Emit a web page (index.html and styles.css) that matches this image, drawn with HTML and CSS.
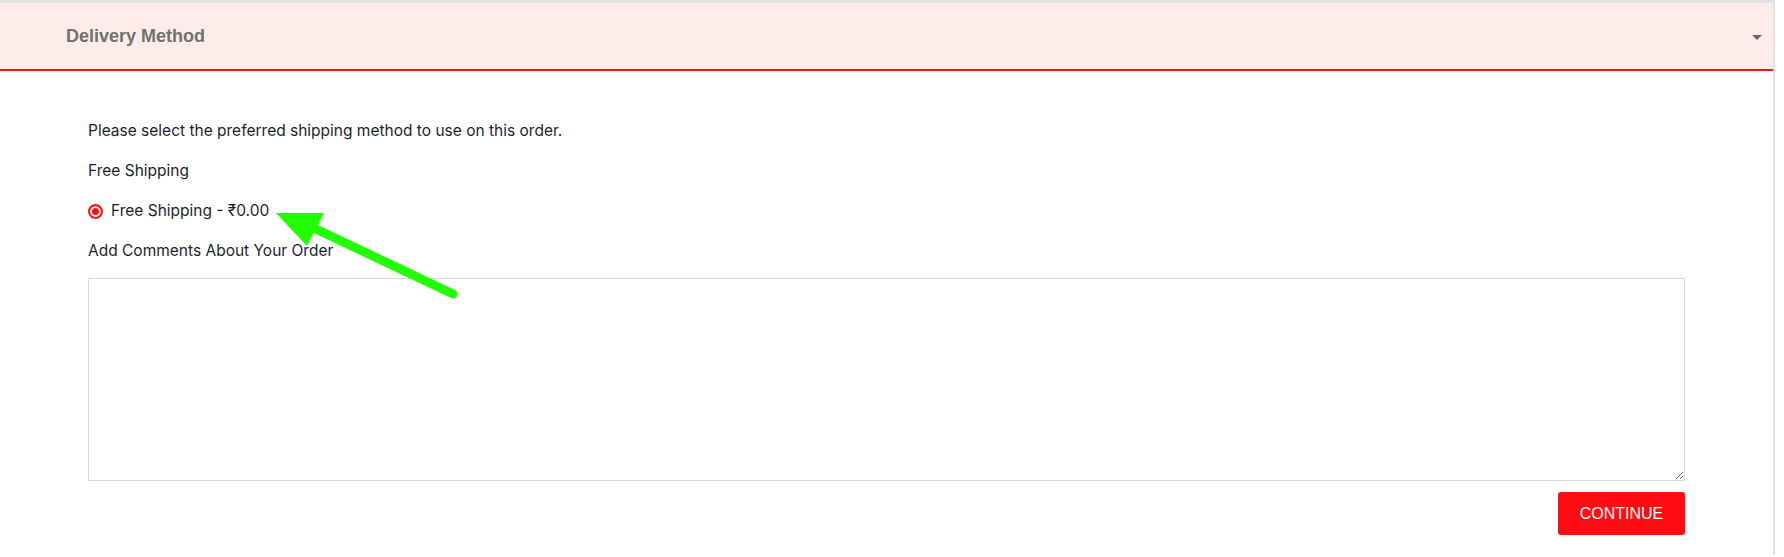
FILE: index.html
```html
<!DOCTYPE html>
<html>
<head>
<meta charset="utf-8"/>
<title>Delivery Method</title>
<link rel="stylesheet" href="styles.css">
</head>
<body>

<div class="panel">
	<div class="panel-head">
		<span class="panel-title">Delivery Method</span>
		<span class="caret"></span>
	</div>
	<div class="panel-body">
		<p>Please select the preferred shipping method to use on this order.</p>
		<p>Free Shipping</p>
		<label class="radio-row"><span class="radio"></span>Free Shipping - ₹0.00</label>
		<p class="comment-label">Add Comments About Your Order</p>
		<textarea class="comment"></textarea>
		<div class="buttons">
			<button class="btn-continue">CONTINUE</button>
		</div>
	</div>
</div>

<svg class="arrow" width="1784" height="557" viewBox="0 0 1784 557">
	<line x1="316" y1="229" x2="453" y2="294" stroke="#22ff00" stroke-width="9" stroke-linecap="round"/>
	<polygon points="276,213 324,213 307,246" fill="#22ff00"/>
</svg>

</body>
</html>
```

FILE: styles.css
```css
body {
	margin: 0px;
	background: #fff;
	font-family: Inter, "Noto Sans", sans-serif;
	color: #1b1f2e;
	position: relative;
}
.panel {
	width: 1775px;
	border-top: 3px solid #e2e2e2;
	border-right: 2px solid #e2e2e2;
	min-height: 554px;
	box-sizing: border-box;
}
.panel-head {
	height: 66px;
	background-color: #feeceb;
	border-bottom: 2px solid #ff1010;
	display: flex;
	align-items: center;
	justify-content: space-between;
	padding: 0 11px 0 66px;
}
.panel-title {
	font-family: "Liberation Sans", Arial, sans-serif;
	font-weight: bold;
	font-size: 18px;
	color: #707070;
	margin-top: 0px;
}
.caret {
	width: 0;
	height: 0;
	border-left: 5px solid transparent;
	border-right: 5px solid transparent;
	border-top: 5px solid #666;
	margin-top: 2px;
}
.panel-body {
	padding: 50px 88px 20px 88px;
	width: 1597px;
	box-sizing: content-box;
}
.panel-body p {
	margin: 0 0 20px 0;
	font-size: 15.5px;
	line-height: 20px;
}
.radio-row {
	display: flex;
	align-items: center;
	font-size: 15.5px;
	line-height: 20px;
	margin-bottom: 20px;
}
.radio {
	width: 15px;
	height: 15px;
	border-radius: 50%;
	background: #ff1010;
	box-sizing: border-box;
	border: 2px solid #ff1010;
	box-shadow: inset 0 0 0 2px #fff;
	margin-right: 8px;
}
.panel-body p.comment-label {
	margin-bottom: 17px;
}
.comment {
	display: block;
	width: 1597px;
	height: 203px;
	box-sizing: border-box;
	border: 1px solid #d9d9d9;
	margin: 0;
	resize: vertical;
}
.buttons {
	display: flex;
	justify-content: flex-end;
	margin-top: 11px;
}
.btn-continue {
	width: 127px;
	height: 43px;
	border: none;
	border-radius: 3px;
	background: #ff0d12;
	color: #fff;
	font-family: "Liberation Sans", Arial, sans-serif;
	font-size: 16px;
}
.arrow {
	position: absolute;
	left: 0;
	top: 0;
	pointer-events: none;
}
```
